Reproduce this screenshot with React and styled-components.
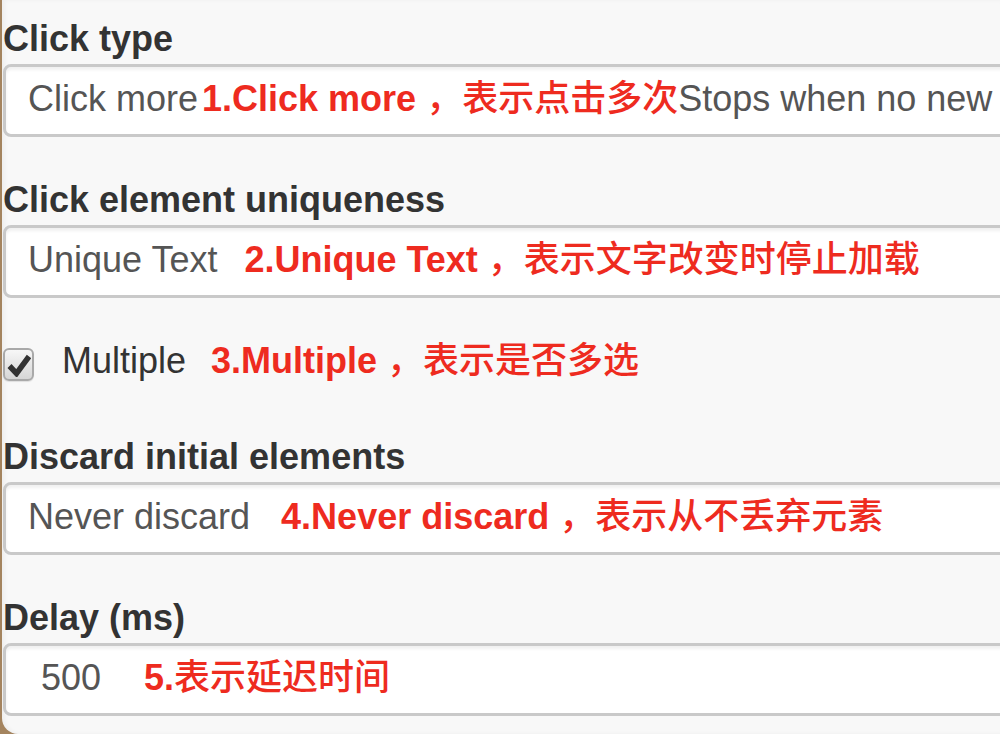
import React from "react";
import styled, { createGlobalStyle } from "styled-components";

const Global = createGlobalStyle`
  html, body { margin: 0; padding: 0; }
  body {
    background: #a4845f;
    font-family: "Liberation Sans", "Noto Sans CJK SC", sans-serif;
  }
`;

const Panel = styled.div`
  margin-left: 2px;
  height: 734px;
  box-sizing: border-box;
  padding: 19px 0 0 1px;
  background: #f8f8f8;
  border-bottom-left-radius: 16px;
  overflow: hidden;
  box-shadow: inset 3px 0 4px rgba(0, 0, 0, 0.04);
`;

const Group = styled.div`
  margin-bottom: 43px;
`;

const Label = styled.div`
  font-size: 36px;
  line-height: 40px;
  font-weight: bold;
  color: #333;
  margin-bottom: 5px;
  white-space: nowrap;
`;

const Field = styled.div`
  height: 73px;
  box-sizing: border-box;
  margin-right: -40px;
  padding: 0 0 4px ${(p) => p.$pad || 22}px;
  display: flex;
  align-items: center;
  border: 3px solid #c9c9c9;
  border-radius: 8px;
  background: #fff;
  box-shadow: inset 0 3px 3px rgba(0, 0, 0, 0.06);
  font-size: 36px;
  line-height: 40px;
  color: #555;
  white-space: nowrap;
  overflow: hidden;
`;

const Value = styled.span`
  display: block;
`;

const CheckRow = styled.div`
  display: flex;
  align-items: flex-start;
  height: 40px;
  margin-bottom: 56px;
  font-size: 36px;
  line-height: 40px;
  color: #333;
  white-space: nowrap;
`;

const Box = styled.span`
  width: 31px;
  height: 33px;
  box-sizing: border-box;
  margin-top: 7px;
  margin-right: 28px;
  display: flex;
  align-items: center;
  justify-content: center;
  border: 2px solid #a9a9a9;
  border-radius: 6px;
  background: linear-gradient(#f7f7f7, #d6d6d6);
  box-shadow: 0 1px 1px rgba(0, 0, 0, 0.1);
  flex-shrink: 0;
`;

const Note = styled.span`
  margin-left: ${(p) => p.$gap}px;
  color: #ee2b1f;
  font-weight: 500;
  line-height: 30px;
`;

const B = styled.b`
  font-weight: bold;
`;

function Check() {
  return (
    <Box>
      <svg width="24" height="24" viewBox="0 0 24 24">
        <path d="M2.5 13 L9.5 20.5 L22 3.5" fill="none" stroke="#333" strokeWidth="5.5" />
      </svg>
    </Box>
  );
}

export default function App() {
  return (
    <>
      <Global />
      <Panel>
        <Group>
          <Label>Click type</Label>
          <Field>
            <Value>
              Click more
              <Note $gap={4}>
                <B>1.Click more </B>，表示点击多次
              </Note>
              Stops when no new elements loaded
            </Value>
          </Field>
        </Group>
        <Group>
          <Label>Click element uniqueness</Label>
          <Field>
            <Value>
              Unique Text
              <Note $gap={27}>
                <B>2.Unique Text </B>，表示文字改变时停止加载
              </Note>
            </Value>
          </Field>
        </Group>
        <CheckRow>
          <Check />
          <Value>
            Multiple
            <Note $gap={25}>
              <B>3.Multiple </B>，表示是否多选
            </Note>
          </Value>
        </CheckRow>
        <Group>
          <Label>Discard initial elements</Label>
          <Field>
            <Value>
              Never discard
              <Note $gap={31}>
                <B>4.Never discard </B>，表示从不丢弃元素
              </Note>
            </Value>
          </Field>
        </Group>
        <Group>
          <Label>Delay (ms)</Label>
          <Field $pad={35}>
            <Value>
              500
              <Note $gap={43}>
                <B>5.</B>表示延迟时间
              </Note>
            </Value>
          </Field>
        </Group>
      </Panel>
    </>
  );
}
